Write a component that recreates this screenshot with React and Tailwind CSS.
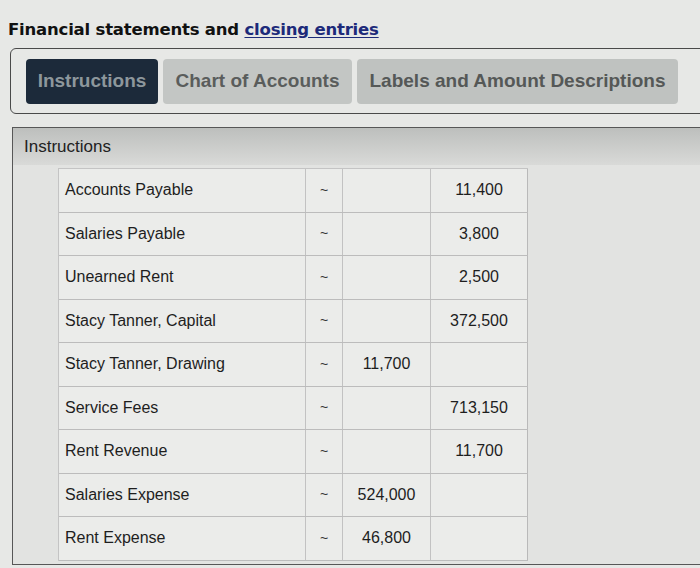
import React from "react";

const rows = [
  { name: "Accounts Payable", debit: "", credit: "11,400" },
  { name: "Salaries Payable", debit: "", credit: "3,800" },
  { name: "Unearned Rent", debit: "", credit: "2,500" },
  { name: "Stacy Tanner, Capital", debit: "", credit: "372,500" },
  { name: "Stacy Tanner, Drawing", debit: "11,700", credit: "" },
  { name: "Service Fees", debit: "", credit: "713,150" },
  { name: "Rent Revenue", debit: "", credit: "11,700" },
  { name: "Salaries Expense", debit: "524,000", credit: "" },
  { name: "Rent Expense", debit: "46,800", credit: "" },
];

const App = () => {
  return (
    <div className="w-[700px] h-[568px] overflow-hidden bg-[#e7e8e6] font-['Liberation_Sans',Arial,sans-serif] text-[#1e1e1e]">
      <h1 className="pt-[19px] pl-[8px] font-['DejaVu_Sans',Verdana,sans-serif] font-bold text-[16.5px] leading-[22px] tracking-[-0.2px] text-[#111]">
        Financial statements and{" "}
        <span className="text-[#1d2a7a] underline underline-offset-2">closing entries</span>
      </h1>

      <div className="mt-[7px] ml-[10px] mr-[-20px] h-[66px] border border-[#4a4a4a] rounded-md flex items-center gap-[5px] pl-[15px]">
        <div className="w-[132px] h-[45px] rounded-[4px] bg-[#1c2a3a] flex items-center justify-center font-bold text-[19px] text-[#8d979c]">
          Instructions
        </div>
        <div className="w-[189px] h-[45px] rounded-[4px] bg-[#c3c6c4] flex items-center justify-center font-bold text-[19px] text-[#5a5d5c]">
          Chart of Accounts
        </div>
        <div className="w-[321px] h-[45px] rounded-[4px] bg-[#bfc2c0] flex items-center justify-center font-bold text-[19px] text-[#555857]">
          Labels and Amount Descriptions
        </div>
      </div>

      <div className="mt-[13px] ml-[12px] mr-[-20px] h-[438px] border border-[#575757] bg-[#e2e3e1]">
        <div className="h-[37px] bg-gradient-to-b from-[#bdbfbd] to-[#d9dad8] flex items-center pl-[11px] text-[17px] text-[#222]">
          Instructions
        </div>
        <div className="mt-[3px] ml-[45px] w-[470px] border-l border-t border-[#c4c4c4]">
          {rows.map((r) => (
            <div key={r.name} className="flex h-[43.5px] border-b border-[#bcbcbc] text-[16px] bg-[#ebecea]">
              <div className="w-[247px] flex items-center pl-[6px] border-r border-[#c2c2c2]">{r.name}</div>
              <div className="w-[37px] flex items-center justify-center border-r border-[#c2c2c2] text-[14px] text-[#333]">~</div>
              <div className="w-[88px] flex items-center justify-center border-r border-[#c2c2c2]">{r.debit}</div>
              <div className="w-[97px] flex items-center justify-center border-r border-[#b9b9b9]">{r.credit}</div>
            </div>
          ))}
        </div>
      </div>
    </div>
  );
};

export default App;
